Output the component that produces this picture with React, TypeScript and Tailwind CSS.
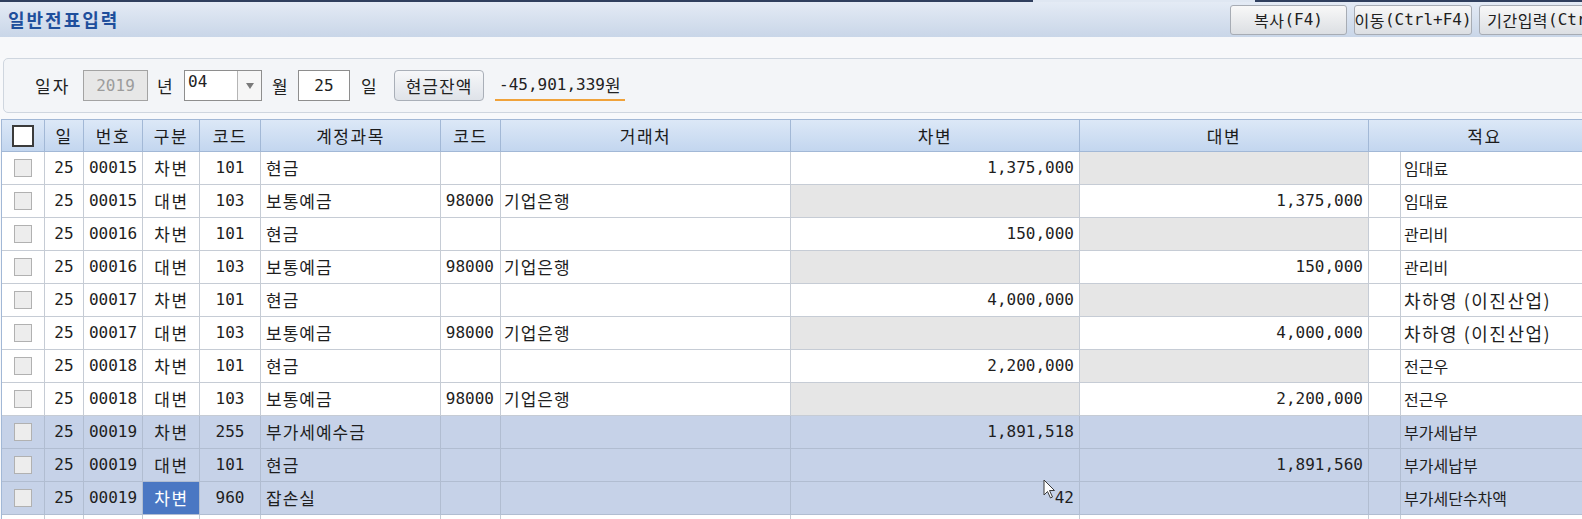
import React from 'react';

const K = "font-['Noto_Sans_CJK_KR',sans-serif]";
const M = "font-['DejaVu_Sans_Mono','Noto_Sans_CJK_KR',monospace]";

type Row = {
  no: string;
  side: string;
  code: string;
  account: string;
  pcode?: string;
  partner?: string;
  debit?: string;
  credit?: string;
  memo: string;
  wide?: boolean;
  hl?: boolean;
  sel?: boolean;
};

const rows: Row[] = [
  { no: '00015', side: '차변', code: '101', account: '현금', debit: '1,375,000', memo: '임대료' },
  { no: '00015', side: '대변', code: '103', account: '보통예금', pcode: '98000', partner: '기업은행', credit: '1,375,000', memo: '임대료' },
  { no: '00016', side: '차변', code: '101', account: '현금', debit: '150,000', memo: '관리비' },
  { no: '00016', side: '대변', code: '103', account: '보통예금', pcode: '98000', partner: '기업은행', credit: '150,000', memo: '관리비' },
  { no: '00017', side: '차변', code: '101', account: '현금', debit: '4,000,000', memo: '차하영 (이진산업)', wide: true },
  { no: '00017', side: '대변', code: '103', account: '보통예금', pcode: '98000', partner: '기업은행', credit: '4,000,000', memo: '차하영 (이진산업)', wide: true },
  { no: '00018', side: '차변', code: '101', account: '현금', debit: '2,200,000', memo: '전근우' },
  { no: '00018', side: '대변', code: '103', account: '보통예금', pcode: '98000', partner: '기업은행', credit: '2,200,000', memo: '전근우' },
  { no: '00019', side: '차변', code: '255', account: '부가세예수금', debit: '1,891,518', memo: '부가세납부', hl: true },
  { no: '00019', side: '대변', code: '101', account: '현금', credit: '1,891,560', memo: '부가세납부', hl: true },
  { no: '00019', side: '차변', code: '960', account: '잡손실', debit: '42', memo: '부가세단수차액', hl: true, sel: true },
];

const cols = 'grid grid-cols-[43px_39px_59px_57px_61px_180px_60px_290px_289px_289px_32px_200px]';

function Cell({
  hl,
  gray,
  sel,
  className = '',
  children,
}: {
  hl?: boolean;
  gray?: boolean;
  sel?: boolean;
  className?: string;
  children?: React.ReactNode;
}) {
  const bg = sel
    ? 'bg-[#4a77c3] text-white border-[#b1bdd1]'
    : hl
      ? 'bg-[#c6d2e8] text-[#1e1e1e] border-[#b1bdd1]'
      : gray
        ? 'bg-[#e6e6e6] text-[#1e1e1e] border-[#c6ccd5]'
        : 'bg-white text-[#1e1e1e] border-[#c6ccd5]';
  return (
    <div className={`h-[33px] border-r border-b flex items-center whitespace-nowrap overflow-hidden ${bg} ${className}`}>
      {children}
    </div>
  );
}

function HeadCell({ children, className = '' }: { children?: React.ReactNode; className?: string }) {
  return (
    <div
      className={`h-[32px] border-r border-b border-[#a2b8d6] bg-linear-to-b from-[#dce8f7] to-[#c3d6ef] flex items-center justify-center text-[17px] tracking-[1.5px] text-[#1b1b1b] whitespace-nowrap ${K} ${className}`}
    >
      {children}
    </div>
  );
}

function TopButton({ w, ko, en }: { w: string; ko: string; en: string }) {
  return (
    <div
      className={`${w} shrink-0 h-[30px] rounded-[3px] border border-[#a7acb4] bg-linear-to-b from-[#f8f8f8] to-[#dcdfe3] flex items-center justify-center whitespace-nowrap text-[#202020]`}
    >
      <span className={`text-[16px] tracking-[0.5px] ${K}`}>{ko}</span>
      <span className={`text-[16px] ${M}`}>{en}</span>
    </div>
  );
}

function DataRow({ r }: { r: Row }) {
  const hl = r.hl;
  return (
    <div className={cols}>
      <Cell hl={hl} className="justify-center">
        <div className="w-[18px] h-[18px] border border-[#b1b1b1] bg-[#ededed]" />
      </Cell>
      <Cell hl={hl} className={`justify-center text-[16px] ${M}`}>25</Cell>
      <Cell hl={hl} className={`justify-center text-[16px] ${M}`}>{r.no}</Cell>
      <Cell hl={hl} sel={r.sel} className={`justify-center pl-[1px] text-[17px] tracking-[1.5px] ${K}`}>
        {r.side}
      </Cell>
      <Cell hl={hl} className={`justify-center text-[16px] ${M}`}>{r.code}</Cell>
      <Cell hl={hl} className={`pl-[5px] text-[17px] tracking-[1px] ${K}`}>{r.account}</Cell>
      <Cell hl={hl} className={`justify-end pr-[6px] text-[16px] ${M}`}>{r.pcode}</Cell>
      <Cell hl={hl} className={`pl-[3px] text-[17px] tracking-[1px] ${K}`}>{r.partner}</Cell>
      <Cell hl={hl} gray={!r.debit} className={`justify-end pr-[5px] text-[16px] ${M}`}>{r.debit}</Cell>
      <Cell hl={hl} gray={!r.credit} className={`justify-end pr-[5px] text-[16px] ${M}`}>{r.credit}</Cell>
      <Cell hl={hl} />
      <Cell hl={hl} className={`pl-[3px] ${r.wide ? 'text-[18px] tracking-[1.5px]' : 'text-[16px]'} ${K}`}>
        {r.memo}
      </Cell>
    </div>
  );
}

export default function App() {
  return (
    <div className={`relative w-[1582px] h-[519px] overflow-hidden bg-[#f8f9fb] ${K}`}>
      {/* top edge */}
      <div className="flex h-[2px]">
        <div className="w-[1033px] bg-[#2f3f5e]" />
        <div className="w-[222px] bg-[#dfe7f2]" />
        <div className="flex-1 bg-[#2f3f5e]" />
      </div>

      {/* title bar */}
      <div className="flex h-[35px] bg-linear-to-b from-[#e4ebf5] to-[#c9d6e8]">
        <div className="w-[1230px] shrink-0 flex items-center pl-[8px]">
          <span className={`text-[18px] font-bold tracking-[2px] text-[#1f4f9c] ${K}`}>일반전표입력</span>
        </div>
        <div className="flex pt-[3px]">
          <TopButton w="w-[117px]" ko="복사" en="(F4)" />
          <div className="w-[7px] shrink-0" />
          <TopButton w="w-[118px]" ko="이동" en="(Ctrl+F4)" />
          <div className="w-[7px] shrink-0" />
          <TopButton w="w-[164px]" ko="기간입력" en="(Ctrl+F5)" />
        </div>
      </div>

      <div className="h-[21px] bg-[#f7f8fa]" />

      {/* filter panel */}
      <div className="ml-[3px] w-[1600px] h-[55px] border border-[#cfd6df] rounded-[5px] bg-[#f3f5f8] flex items-center pl-[31px] text-[#222]">
        <span className={`w-[48px] text-[17px] tracking-[2px] ${K}`}>일자</span>
        <div
          className={`w-[65px] h-[31px] border border-[#a3a3a3] bg-[#e7e7e7] flex items-center justify-center text-[16px] text-[#9c9c9c] ${M}`}
        >
          2019
        </div>
        <span className={`w-[36px] pl-[9px] text-[17px] ${K}`}>년</span>
        <div className="w-[78px] h-[31px] border border-[#8e8e8e] bg-white flex">
          <div className={`flex-1 pl-[3px] leading-[22px] text-[16px] ${M}`}>04</div>
          <div className="w-[24px] border-l border-[#b5b5b5] bg-[#f6f6f6] flex items-center justify-center">
            <svg width="8" height="6" viewBox="0 0 8 6">
              <path d="M0 0 H8 L4 6 Z" fill="#7a7a7a" />
            </svg>
          </div>
        </div>
        <span className={`w-[36px] pl-[10px] text-[17px] ${K}`}>월</span>
        <div className={`w-[52px] h-[31px] border border-[#8e8e8e] bg-white flex items-center justify-center text-[16px] ${M}`}>
          25
        </div>
        <span className={`w-[44px] pl-[11px] text-[17px] ${K}`}>일</span>
        <div
          className={`w-[90px] h-[31px] rounded-[4px] border border-[#a9afb8] bg-linear-to-b from-[#f6f7f9] to-[#dfe3e9] flex items-center justify-center text-[17px] tracking-[1px] ${K}`}
        >
          현금잔액
        </div>
        <div className="ml-[11px] h-[31px] flex items-center border-b-2 border-[#f0a23a] px-[4px]">
          <span className={`text-[16px] ${M}`}>-45,901,339</span>
          <span className={`text-[17px] ${K}`}>원</span>
        </div>
      </div>

      {/* grid */}
      <div className="mt-[6px] ml-[1px] border-l border-t border-[#a2b8d6]">
        <div className={cols}>
          <HeadCell>
            <div className="w-[22px] h-[22px] border-2 border-[#3b3b3b] bg-white" />
          </HeadCell>
          <HeadCell>일</HeadCell>
          <HeadCell>번호</HeadCell>
          <HeadCell>구분</HeadCell>
          <HeadCell>코드</HeadCell>
          <HeadCell>계정과목</HeadCell>
          <HeadCell>코드</HeadCell>
          <HeadCell>거래처</HeadCell>
          <HeadCell>차변</HeadCell>
          <HeadCell>대변</HeadCell>
          <HeadCell className="col-span-2">적요</HeadCell>
        </div>
        {rows.map((r, i) => (
          <DataRow key={i} r={r} />
        ))}
        <div className={cols}>
          {Array.from({ length: 12 }).map((_, i) => (
            <Cell key={i} />
          ))}
        </div>
      </div>

      {/* mouse pointer */}
      <svg className="absolute left-[1043px] top-[479px]" width="13" height="20" viewBox="0 0 13 20">
        <path
          d="M1 1 L1 16 L4.5 12.5 L7.5 19 L9.5 18 L6.5 11.5 L11.5 11.5 Z"
          fill="#ffffff"
          stroke="#3a3a3a"
          strokeWidth="1"
          strokeLinejoin="round"
        />
      </svg>
    </div>
  );
}
